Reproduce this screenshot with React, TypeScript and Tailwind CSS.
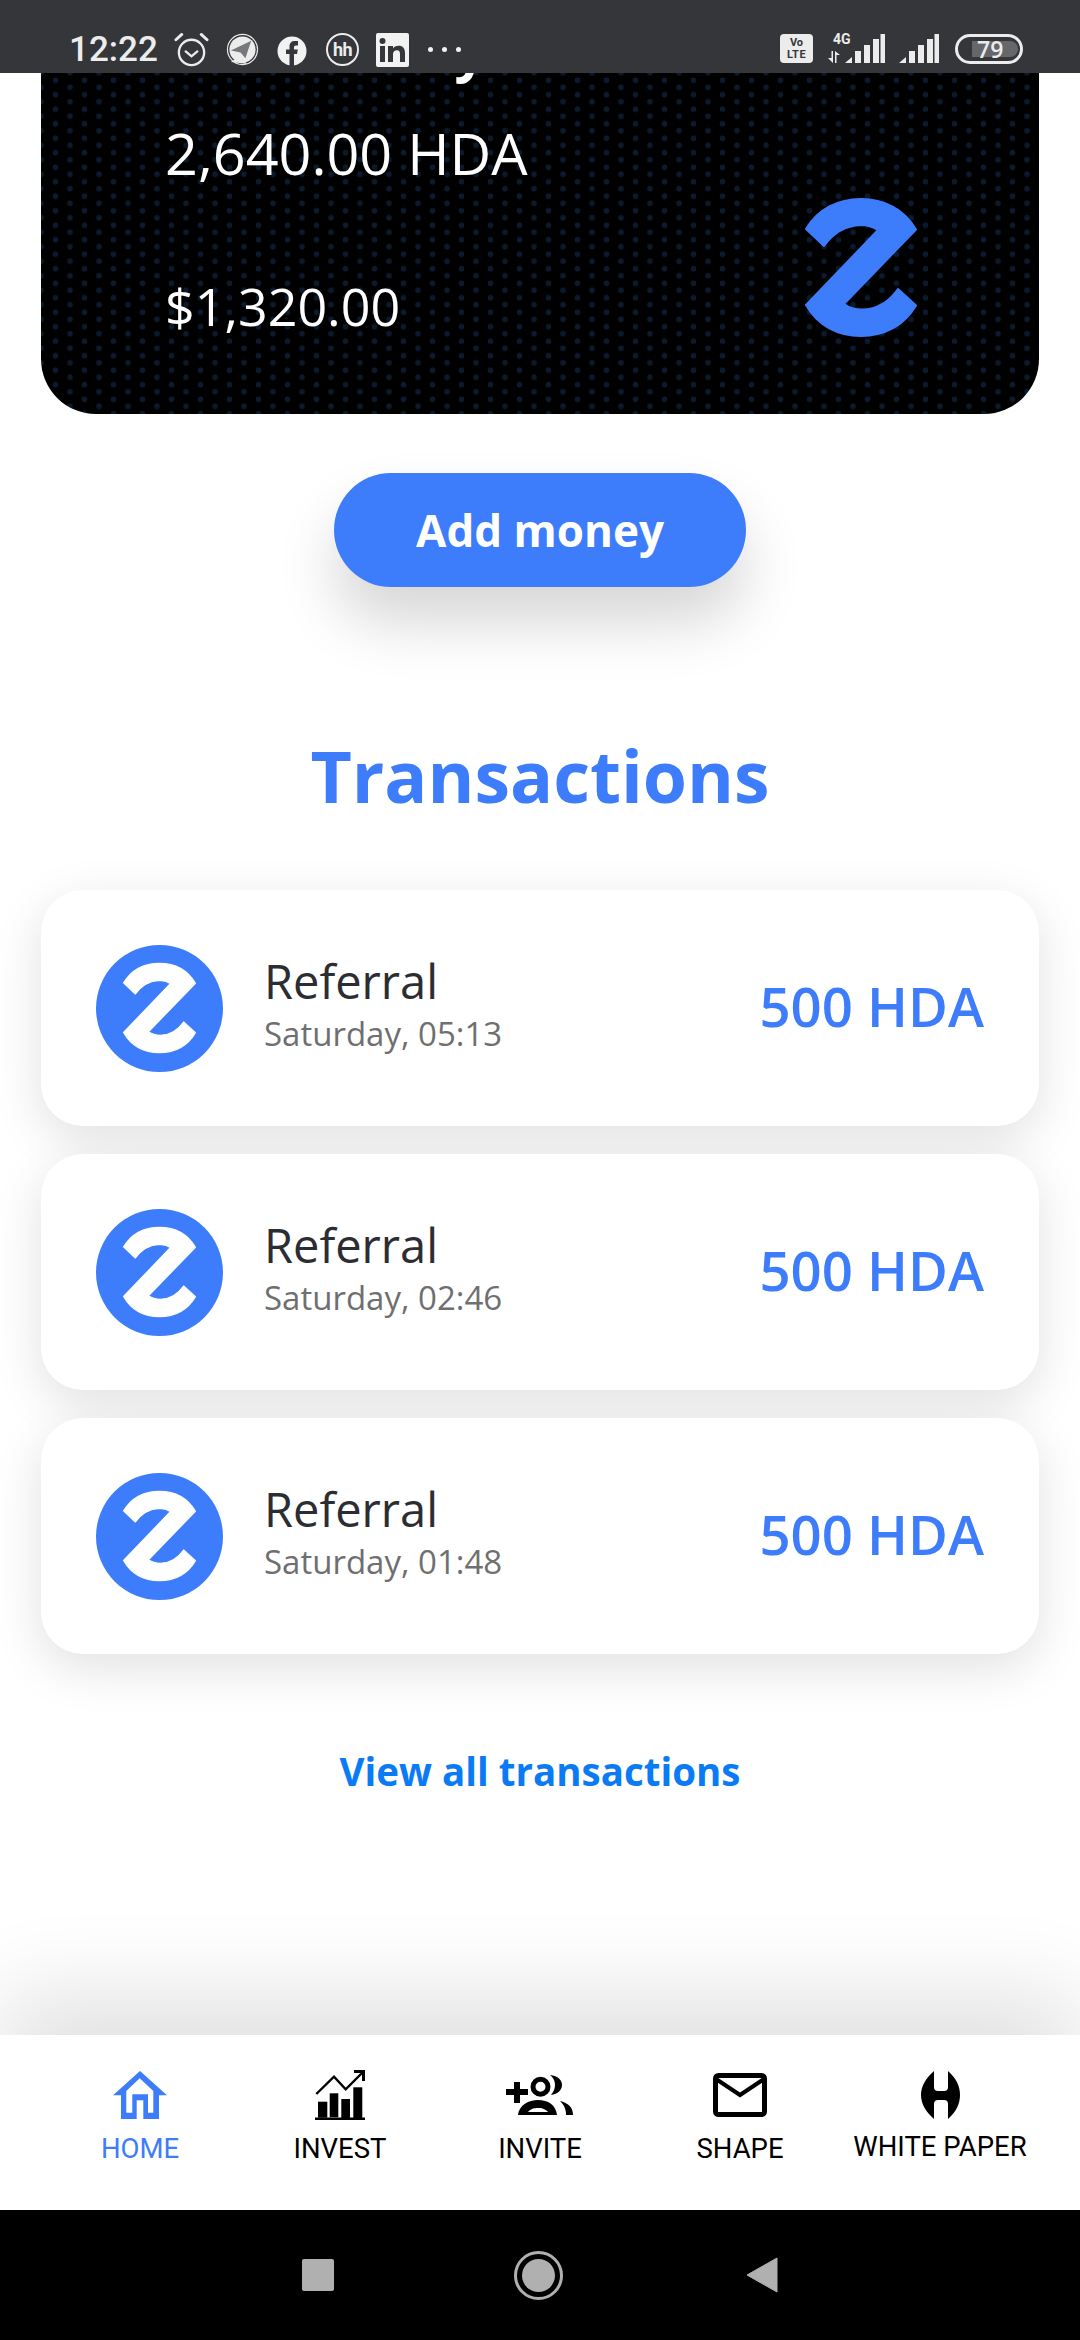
import React from 'react';

const LOGO_PATH =
  'M0 30 C12 10 32 0 55 0 C78 0 98 10 110 30.5 L38 105 Q46 110.5 56 110.5 Q78 110 92 90 L110 106.5 C98 127 78 137 55 137 C32 137 12 127 0 106 L72 31 Q64 26 55 26 Q32 27 18 47 Z';

const Logo: React.FC<{ className: string; fill: string }> = ({ className, fill }) => (
  <svg viewBox="-2 -2 114 141" className={className}>
    <path d={LOGO_PATH} fill={fill} stroke={fill} strokeWidth="2" strokeLinejoin="round" />
  </svg>
);

const Bars: React.FC = () => (
  <svg viewBox="0 0 40 29" className="w-[40px] h-[29px] shrink-0" fill="#ececec">
    <path d="M0 29 L7 23 V29 Z" />
    <rect x="10" y="17" width="6" height="12" />
    <rect x="19" y="11" width="6" height="18" />
    <rect x="28" y="5" width="6" height="24" />
    <rect x="35.5" y="0" width="4.5" height="29" />
  </svg>
);

const StatusBar: React.FC = () => (
  <div className="relative z-20 h-[73px] shrink-0 bg-[#35363a] flex items-end pb-[6px] pl-[69px] pr-[57px] text-[#ececec]">
    <span className="font-['Roboto',sans-serif] font-medium text-[35px] leading-[40px] w-[88px] -mb-[3px] whitespace-nowrap">12:22</span>
    <svg viewBox="0 0 36 36" className="w-[35px] h-[35px] ml-[17px]" fill="none" stroke="#ececec" strokeWidth="2.4" strokeLinecap="round">
      <circle cx="18" cy="21" r="13" />
      <path d="M12 20 L18 25 L24 20" />
      <path d="M2 8 L8 2.5 M34 8 L28 2.5" strokeWidth="3" />
    </svg>
    <svg viewBox="0 0 34 34" className="w-[33px] h-[33px] ml-[17px] mb-[1px]">
      <circle cx="17" cy="17" r="15.5" fill="none" stroke="#ececec" strokeWidth="1.2" />
      <circle cx="17" cy="17" r="13.5" fill="#ececec" />
      <path d="M5 18 L26 8 L20 26 L15 20 Z" fill="#77787b" />
      <path d="M5 30 L14 24 L22 32 Z" fill="#ececec" />
    </svg>
    <svg viewBox="0 0 30 30" className="w-[30px] h-[30px] ml-[18px] mb-[1px]">
      <circle cx="15" cy="15" r="14.5" fill="#f2f2f2" />
      <path d="M12.5 30 V18 H9 V13.5 H12.5 V10.5 C12.5 7 14.5 5 18 5 H21 V9.5 H19 C17.6 9.5 17 10.2 17 11.4 V13.5 H20.8 L20 18 H17 V30 Z" fill="#35363a" />
    </svg>
    <div className="w-[33px] h-[33px] ml-[19px] mb-[1px] rounded-full border-2 border-[#ececec] flex items-center justify-center">
      <span className="font-['Roboto',sans-serif] font-bold text-[18px] leading-none tracking-[-0.5px]">hh</span>
    </div>
    <svg viewBox="0 0 33 34" className="w-[33px] h-[34px] ml-[17px]">
      <rect width="33" height="34" rx="2" fill="#f2f2f2" />
      <rect x="4" y="13" width="5" height="16" fill="#35363a" />
      <circle cx="6.5" cy="8" r="3" fill="#35363a" />
      <path d="M12 13 H17 V15.5 C18 13.8 20 12.8 22.5 12.8 C27 12.8 29 15.5 29 20 V29 H24 V21 C24 18.8 23.2 17.3 21 17.3 C18.7 17.3 17 18.8 17 21 V29 H12 Z" fill="#35363a" />
    </svg>
    <div className="flex gap-[9px] ml-[19px] mb-[15px]">
      <div className="w-[5px] h-[5px] rounded-full bg-[#f2f2f2]" />
      <div className="w-[5px] h-[5px] rounded-full bg-[#f2f2f2]" />
      <div className="w-[5px] h-[5px] rounded-full bg-[#f2f2f2]" />
    </div>
    <div className="ml-auto w-[33px] h-[29px] mb-[4px] rounded-[4px] bg-[#ececec] flex flex-col items-center justify-center font-['Roboto',sans-serif] font-bold text-[#35363a] text-[11px] leading-[12px]">
      <span>Vo</span>
      <span className="tracking-[0.5px]">LTE</span>
    </div>
    <div className="relative w-[17px] h-[30px] ml-[15px] mb-[4px]">
      <span className="absolute -top-[1px] left-[5px] font-['Roboto',sans-serif] font-bold text-[14px] leading-[14px]">4G</span>
      <svg viewBox="0 0 12 12" className="absolute bottom-0 left-0 w-[12px] h-[12px]" fill="#ececec">
        <path d="M3.5 0 H5 V12 L0 7 H3.5 Z" />
        <path d="M7 12 H8.5 V4 H12 L7 0 Z" />
      </svg>
    </div>
    <div className="mb-[4px]"><Bars /></div>
    <div className="ml-[14px] mb-[4px]"><Bars /></div>
    <div className="relative w-[68px] h-[30px] ml-[16px] mb-[3px] rounded-full border-[3px] border-[#ececec] flex items-center">
      <div className="w-[46px] h-[16px] ml-[14px] rounded-r-full bg-[#66676b]" />
      <span className="absolute left-[19px] top-[-3px] font-['Open_Sans',sans-serif] font-semibold text-[23px] leading-[30px] text-[#ececec]">79</span>
    </div>
  </div>
);

const BalanceCard: React.FC = () => (
  <div className="h-[341px] shrink-0 mx-[41px] rounded-b-[55px] bg-black bg-[radial-gradient(circle,#0c1a2f_2.6px,transparent_3.2px),radial-gradient(circle,#0c1a2f_2.6px,transparent_3.2px)] bg-[length:29px_14.5px] bg-[position:0_0,14.5px_7px] pl-[124px] pr-[121px] text-white font-['Open_Sans',sans-serif] flex justify-between">
    <div>
      <div className="-mt-[51px] font-bold text-[55px] leading-[56px] whitespace-nowrap">HDA Money</div>
      <div className="mt-[43px] text-[57.5px] leading-[64px] whitespace-nowrap">2,640.00 HDA</div>
      <div className="mt-[89px] text-[52px] leading-[64px]">$1,320.00</div>
    </div>
    <Logo className="w-[114px] h-[141px] mt-[124px]" fill="#3d7dfc" />
  </div>
);

const TransactionRow: React.FC<{ time: string }> = ({ time }) => (
  <div className="h-[236px] bg-white rounded-[42px] shadow-[0_14px_50px_rgba(0,0,0,0.12)] flex items-center pl-[55px] pr-[55px] font-['Open_Sans',sans-serif]">
    <div className="w-[127px] h-[127px] rounded-full bg-[#3d7dfc] flex items-center justify-center shrink-0">
      <Logo className="w-[75px] h-[92px]" fill="#ffffff" />
    </div>
    <div className="ml-[41px] flex-1 pb-[9px]">
      <div className="text-[#2b2d33] text-[47px] leading-[58px]">Referral</div>
      <div className="mt-[3px] text-[#6f6f6f] text-[33px] leading-[42px]">{time}</div>
    </div>
    <div className="text-[#3d7dfc] font-semibold text-[54.5px] pb-[2px]">500 HDA</div>
  </div>
);

const HomeIcon: React.FC = () => (
  <svg viewBox="0 0 54 48" className="w-[54px] h-[48px]">
    <path d="M27 0 L54 24.3 H46 V48 H8 V24.3 H0 Z" fill="#3d7dfc" />
    <path d="M26.7 7.3 L40.3 20 V41.7 H35 V23.3 H19.3 V41.7 H13.3 V20 Z" fill="#ffffff" />
    <rect x="23.7" y="29.3" width="6.6" height="18.7" fill="#ffffff" />
  </svg>
);

const InvestIcon: React.FC = () => (
  <svg viewBox="0 0 50 50" className="w-[50px] h-[50px]">
    <path d="M1.3 24 L19 6.7 L30.7 19.3 L48 2" fill="none" stroke="#000" strokeWidth="2.4" />
    <path d="M39 0 H50 V11 H47 V3 H39 Z" />
    <rect x="3" y="31.7" width="9.3" height="16" />
    <rect x="14.7" y="23.3" width="8.6" height="24" />
    <rect x="26.3" y="29" width="8.7" height="19" />
    <rect x="38.3" y="17.3" width="9" height="31" />
    <rect x="0" y="47.5" width="50" height="2.5" />
  </svg>
);

const InviteIcon: React.FC = () => (
  <svg viewBox="0 0 68 40" className="w-[68px] h-[40px]">
    <path d="M0 14 H8 V7 H14 V14 H22 V20 H14 V28 H8 V20 H0 Z" />
    <circle cx="34.5" cy="11.7" r="7.5" fill="none" stroke="#000" strokeWidth="5" />
    <path d="M12 40 C13 30 23 25 32 25 C42 25 50 30 51 40 Z M22 37 H42 C39 33.5 35 33 32 33 C28 33 25 33.5 22 37 Z" fillRule="evenodd" />
    <path d="M44 0 C52 1 56 5 56 10 C56 15 52 19 45 20 C48 16 49 13 49 10 C49 7 48 3 44 0 Z" />
    <path d="M54 26 C62 28 67 32 67 40 H60 C60 34 58 30 54 26 Z" />
  </svg>
);

const MailIcon: React.FC = () => (
  <svg viewBox="0 0 54 44" className="w-[54px] h-[44px]" fill="none" stroke="#000">
    <rect x="2.5" y="2.5" width="49" height="39" rx="3" strokeWidth="5" />
    <path d="M3 6 L27 22 L51 6" strokeWidth="4" />
  </svg>
);

const PaperIcon: React.FC = () => (
  <svg viewBox="0 0 39 48" className="w-[39px] h-[48px]">
    <path d="M13 0 V16 Q13 20 17 20 H23 Q27 20 27 16 V0 C35 7 39 15 39 24 C39 33 35 41 27 48 V33 Q27 29 23 29 H17 Q13 29 13 33 V48 C5 41 0 33 0 24 C0 15 5 7 13 0 Z" />
  </svg>
);

const navItems = [
  { label: 'HOME', icon: <HomeIcon />, color: 'text-[#3d7dfc]', gap: 'mt-[13px]' },
  { label: 'INVEST', icon: <InvestIcon />, color: 'text-black', gap: 'mt-[13px]' },
  { label: 'INVITE', icon: <InviteIcon />, color: 'text-black', gap: 'mt-[13px]' },
  { label: 'SHAPE', icon: <MailIcon />, color: 'text-black', gap: 'mt-[13px]' },
  { label: 'WHITE PAPER', icon: <PaperIcon />, color: 'text-black', gap: 'mt-[11px]' },
];

const BottomNav: React.FC = () => (
  <div className="relative z-10 h-[175px] shrink-0 bg-white shadow-[0_-40px_90px_rgba(0,0,0,0.12)] flex px-[40px] pt-[35px]">
    {navItems.map((item) => (
      <div key={item.label} className="w-[200px] flex flex-col items-center">
        <div className="h-[50px] flex items-center justify-center">{item.icon}</div>
        <span className={`font-['Roboto',sans-serif] text-[27.5px] leading-[32px] whitespace-nowrap ${item.color} ${item.gap}`}>
          {item.label}
        </span>
      </div>
    ))}
  </div>
);

const SystemBar: React.FC = () => (
  <div className="relative z-10 h-[130px] shrink-0 bg-black flex items-center justify-center">
    <div className="w-[32px] h-[32px] rounded-[2px] bg-[#b0b0b0]" />
    <div className="ml-[180px] w-[49px] h-[49px] rounded-full border-[3px] border-[#b0b0b0] flex items-center justify-center">
      <div className="w-[33px] h-[33px] rounded-full bg-[#b0b0b0]" />
    </div>
    <svg viewBox="0 0 32 36" className="ml-[183px] w-[32px] h-[36px]">
      <path d="M31 1 V35 L1 18 Z" fill="#b0b0b0" stroke="#b0b0b0" strokeLinejoin="round" />
    </svg>
  </div>
);

export default function App() {
  return (
    <div className="w-[1080px] h-[2340px] bg-white flex flex-col overflow-hidden">
      <StatusBar />
      <main className="flex-1 min-h-0 flex flex-col overflow-hidden">
        <BalanceCard />
        <button className="self-center mt-[59px] w-[412px] h-[114px] shrink-0 rounded-[57px] bg-[#3d7dfc] text-white font-['Open_Sans',sans-serif] font-bold text-[44px] shadow-[0_36px_60px_rgba(0,0,0,0.16)]">
          Add money
        </button>
        <h2 className="mt-[143px] text-center text-[#3d7dfc] font-['Open_Sans',sans-serif] font-bold text-[71.5px] leading-[92px]">
          Transactions
        </h2>
        <div className="mt-[68px] mx-[41px] flex flex-col gap-[28px]">
          <TransactionRow time="Saturday, 05:13" />
          <TransactionRow time="Saturday, 02:46" />
          <TransactionRow time="Saturday, 01:48" />
        </div>
        <div className="mt-[90px] text-center text-[#0a7bf5] font-['Open_Sans',sans-serif] font-bold text-[38.5px] leading-[54px]">
          View all transactions
        </div>
      </main>
      <BottomNav />
      <SystemBar />
    </div>
  );
}
